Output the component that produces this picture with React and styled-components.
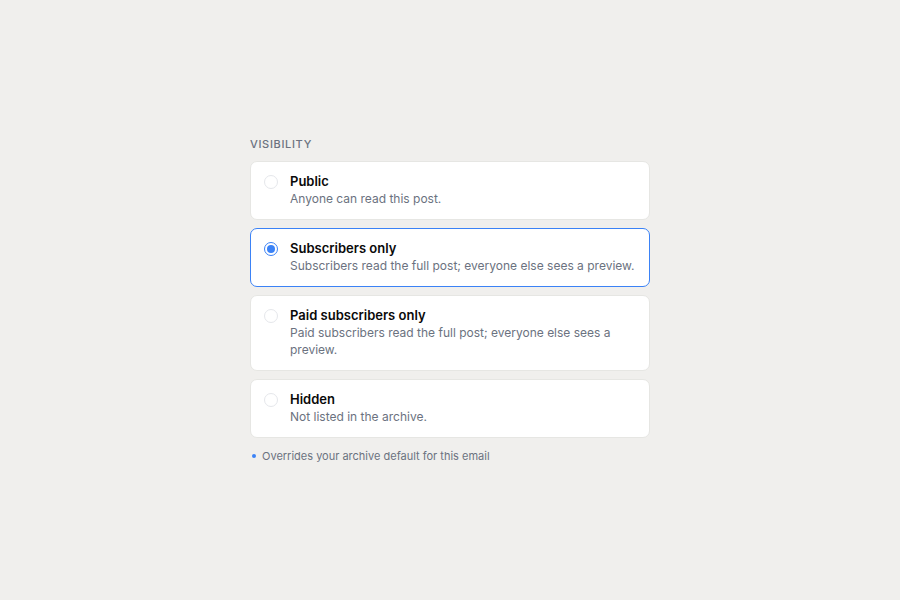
import React from "react";
import styled, { createGlobalStyle } from "styled-components";

const Global = createGlobalStyle`
  html, body { margin: 0; padding: 0; }
  body {
    background: #f0efed;
    font-family: Inter, "Noto Sans", sans-serif;
    -webkit-font-smoothing: antialiased;
  }
`;

const Page = styled.div`
  min-height: 100vh;
  display: flex;
  align-items: center;
  justify-content: center;
`;

const Section = styled.div`
  width: 400px;
  display: flex;
  flex-direction: column;
`;

const Label = styled.div`
  font-size: 11px;
  line-height: 14px;
  font-weight: 500;
  letter-spacing: 0.06em;
  text-transform: uppercase;
  color: #6b7280;
  margin-bottom: 10px;
`;

const List = styled.div`
  display: flex;
  flex-direction: column;
  gap: 8px;
`;

const Card = styled.label`
  display: flex;
  align-items: flex-start;
  gap: 12px;
  padding: 10px 12px 12px 13px;
  background: #fff;
  border: 1px solid ${(p) => (p.$selected ? "#3b82f6" : "#e6e6e3")};
  border-radius: 7px;
  cursor: pointer;
`;

const Radio = styled.span`
  flex: none;
  box-sizing: border-box;
  width: 14px;
  height: 14px;
  margin-top: 3px;
  border-radius: 50%;
  border: ${(p) => (p.$selected ? "1.5px solid #3b82f6" : "1px solid #e5e7eb")};
  display: flex;
  align-items: center;
  justify-content: center;
  &::after {
    content: "";
    display: ${(p) => (p.$selected ? "block" : "none")};
    width: 8px;
    height: 8px;
    border-radius: 50%;
    background: #3b82f6;
  }
`;

const Text = styled.div`
  display: flex;
  flex-direction: column;
`;

const Title = styled.div`
  font-size: 13px;
  line-height: 18px;
  font-weight: 600;
  color: #0a0a0a;
`;

const Desc = styled.div`
  font-size: 12px;
  line-height: 17px;
  color: #6b7280;
`;

const Note = styled.div`
  display: flex;
  align-items: center;
  gap: 6px;
  margin-top: 11px;
  padding-left: 2px;
  font-size: 11px;
  line-height: 14px;
  color: #6b7280;
`;

const Dot = styled.span`
  width: 4px;
  height: 4px;
  border-radius: 50%;
  background: #3b82f6;
`;

const options = [
  { title: "Public", desc: "Anyone can read this post." },
  {
    title: "Subscribers only",
    desc: "Subscribers read the full post; everyone else sees a preview.",
    selected: true,
  },
  {
    title: "Paid subscribers only",
    desc: "Paid subscribers read the full post; everyone else sees a preview.",
  },
  { title: "Hidden", desc: "Not listed in the archive." },
];

export default function App() {
  return (
    <>
      <Global />
      <Page>
        <Section>
          <Label>Visibility</Label>
          <List>
            {options.map((o) => (
              <Card key={o.title} $selected={o.selected}>
                <Radio $selected={o.selected} />
                <Text>
                  <Title>{o.title}</Title>
                  <Desc>{o.desc}</Desc>
                </Text>
              </Card>
            ))}
          </List>
          <Note>
            <Dot />
            Overrides your archive default for this email
          </Note>
        </Section>
      </Page>
    </>
  );
}
